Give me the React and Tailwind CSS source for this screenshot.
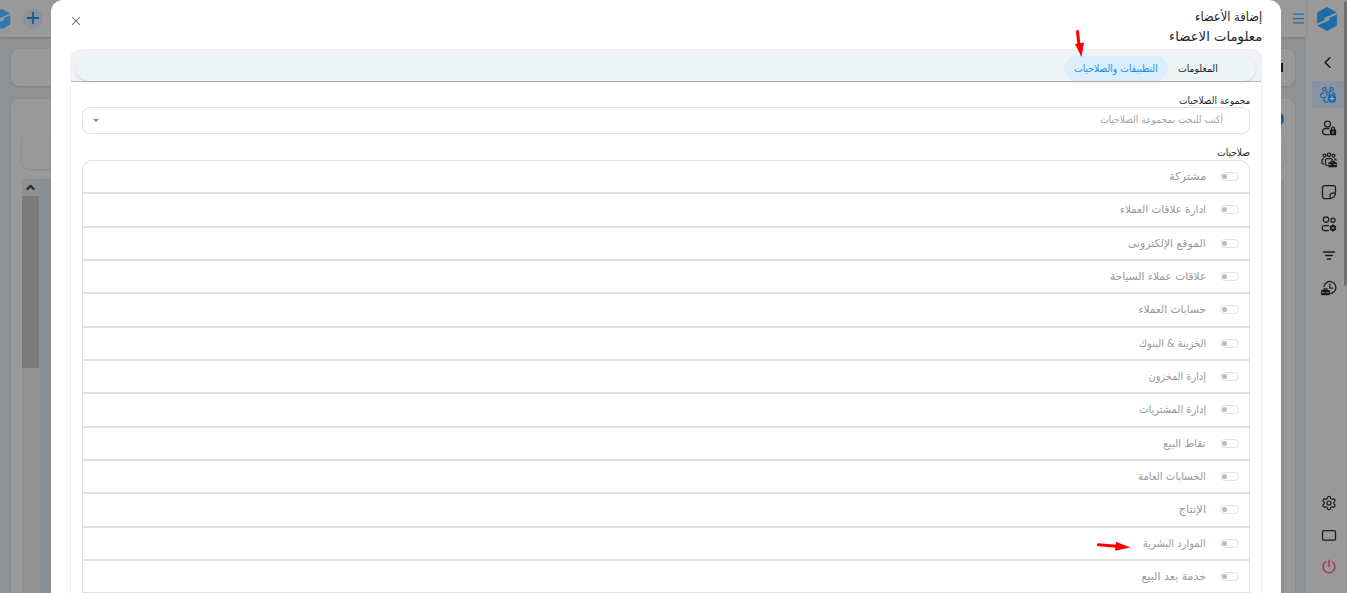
import { useLayoutEffect, useRef } from 'react'
import { ChevronLeft, Menu, Plus, Settings, X, ChevronUp } from 'lucide-react'

const permissions = [
  { name: 'مشتركة', width: 37 },
  { name: 'ادارة علاقات العملاء', width: 86 },
  { name: 'الموقع الإلكترونى', width: 78 },
  { name: 'علاقات عملاء السياحة', width: 96 },
  { name: 'حسابات العملاء', width: 67.5 },
  { name: 'الخزينة & البنوك', width: 67 },
  { name: 'إدارة المخزون', width: 57.5 },
  { name: 'إدارة المشتريات', width: 67 },
  { name: 'نقاط البيع', width: 43 },
  { name: 'الحسابات العامة', width: 68 },
  { name: 'الإنتاج', width: 27.5 },
  { name: 'الموارد البشرية', width: 63 },
  { name: 'خدمة بعد البيع', width: 64 },
]

// keeps a label at a fixed width whatever the fallback font is
function Label({ width, className, children }) {
  const ref = useRef(null)

  useLayoutEffect(() => {
    const el = ref.current
    el.style.transform = `scaleX(${width / el.offsetWidth})`
  }, [width])

  return (
    <span className={`flex shrink-0 items-center ${className}`} style={{ width }}>
      <span ref={ref} className="inline-block shrink-0 origin-right whitespace-nowrap">{children}</span>
    </span>
  )
}

function Logo({ className }) {
  return (
    <svg viewBox="0 0 22 24" className={className}>
      <path d="M.8 7.500v9M21.200 7.500v9" stroke="#a58c7c" strokeWidth="1" />
      <path fill="currentColor" d="M11 0 20.800 5.500v13L11 24 1.200 18.500v-13z" />
      <path d="M22 6 8.500 12M0 18l13.500-6" fill="none" stroke="#989898" strokeWidth="2" />
    </svg>
  )
}

function Icon({ children, className = 'text-[#1b1b1d]' }) {
  return (
    <svg viewBox="0 0 16 16" fill="none" stroke="currentColor" strokeWidth="1.250" strokeLinecap="round" strokeLinejoin="round" className={`size-4 shrink-0 ${className}`}>
      {children}
    </svg>
  )
}

function TeamIcon({ children, className }) {
  return (
    <Icon className={className}>
      <circle cx="4.500" cy="2.400" r="1.700" />
      <circle cx="11.500" cy="2.400" r="1.700" />
      <circle cx="8" cy="6.500" r="1.700" />
      <path d="M3.500 6H2.300A1.500 1.500 0 0 0 .8 7.500V9c0 1 .7 1.500 1.700 1.500M12.500 6h1.200c.9 0 1.500.7 1.500 1.500M6 10.200c-1.200 0-2 .8-2 1.800v1.200c0 1 .8 1.800 1.800 1.800H8" />
      {children}
    </Icon>
  )
}

function Sidebar() {
  return (
    <aside className="flex w-[41px] shrink-0 bg-[#999]">
      <div className="flex h-[593px] w-[3px] shrink-0 pt-px">
        <div className="h-[285px] w-full rounded-full bg-[#707070]" />
      </div>
      <div className="flex w-[38px] flex-col">
        <div className="flex h-[38px] w-full items-center ps-[6px]">
          <Logo className="h-6 w-[22px] text-[#1b6cab]" />
        </div>
        <div className="flex h-[43px] items-center ps-[7px] pt-1.5">
          <ChevronLeft className="h-[19px] w-[19px] text-[#111]" strokeWidth={1.8} />
        </div>
        <div className="flex h-[27px] w-[32px] items-center justify-center bg-[#8992a0] pt-px">
          <TeamIcon className="text-[#1767a7]">
            <circle cx="12" cy="11.500" r="3.600" fill="currentColor" />
            <path d="M12 9.700v3.600M10.200 11.500h3.600" stroke="#a5adb8" />
          </TeamIcon>
        </div>
        <div className="mt-[12px] flex flex-col gap-4 ps-[7px]">
          <Icon>
            <circle cx="6.500" cy="4" r="3" />
            <path d="M8 8.500H4.500C2.500 8.500 1.500 9.800 1.500 11.500S2.500 14.500 4.500 14.500H8" />
            <path d="M9.500 10h5v4.500h-5z" fill="currentColor" />
            <path d="M10.500 10V8.600a1.500 1.500 0 0 1 3 0V10" />
            <path d="M12 11.700v1.200" stroke="#999" />
          </Icon>
          <Icon>
            <circle cx="3.500" cy="3.500" r="1.500" />
            <circle cx="8" cy="2.800" r="1.700" />
            <circle cx="12.500" cy="3.500" r="1.500" />
            <path d="M2.500 6.800C1.500 6.800 1 7.500 1 8.300v2.200C1 11.500 1.700 12 2.500 12M6.300 13.500c-1.300 0-1.800-.8-1.800-1.800V8.500c0-1 .7-1.800 1.700-1.800h3.600c.7 0 1.200.3 1.500.8M13.500 6.800c.9 0 1.500.7 1.500 1.500" />
            <path d="M8 10.800h7.300v3.700H8z" fill="currentColor" />
            <path d="M10.200 10.500V9h3v1.500" />
            <path d="M8 12.500h2M13 12.500h2" stroke="#999" strokeWidth=".8" />
          </Icon>
          <Icon>
            <path d="M4 1.500h8.500a2 2 0 0 1 2 2V9c0 3-2.500 5.500-5.500 5.500H4a2.500 2.500 0 0 1-2.500-2.500V4A2.500 2.500 0 0 1 4 1.500zM9 14.300v-2.800A2.500 2.500 0 0 1 11.500 9h2.900" />
          </Icon>
          <Icon>
            <circle cx="5" cy="3.600" r="2.700" />
            <circle cx="12" cy="4.300" r="2.100" />
            <path d="M7.500 9.500h-4C2 9.500 1.200 10.500 1.200 12s1 2.500 2.300 2.500h4" />
            <circle cx="12" cy="12" r="2" strokeWidth="1.800" />
            <path d="M12 8.900v6.200M9.400 10.500l5.200 3M9.400 13.500l5.200-3" strokeWidth="1.400" />
            <circle cx="12" cy="12" r="1.100" fill="#999" stroke="none" />
          </Icon>
          <Icon>
            <path d="M2.500 4h11M4.800 7.500h6.400M6.500 11h3" strokeWidth="1.600" />
          </Icon>
          <Icon>
            <path d="M3 6.500a6 6 0 1 1 6 7M8.800 4v4h3" />
            <path d="M.8 10.500h7.400v4H.8z" fill="currentColor" />
            <path d="M3 10.500V8.800h3v1.700" />
            <path d="M1.500 12.500h2M5.500 12.500h2" stroke="#999" strokeWidth=".7" />
          </Icon>
        </div>
        <div className="mt-auto mb-[18px] flex flex-col gap-4 ps-[7px]">
          <Settings className="size-4 text-[#1b1b1d]" strokeWidth={1.8} />
          <Icon>
            <rect x="1.500" y="3.500" width="13" height="9.600" rx="1.300" />
          </Icon>
          <Icon className="text-[#aa2742]">
            <path d="M8 1v6.500M4.800 2.700a6 6 0 1 0 6.400 0" />
          </Icon>
        </div>
      </div>
    </aside>
  )
}

function Page() {
  return (
    <div className="flex h-[593px] overflow-hidden bg-[#8e9295]">
      <Sidebar />
      <div className="flex grow flex-col">
        <header className="flex h-[37px] shrink-0 items-center justify-between bg-[#999] shadow-sm">
          <Menu className="-mt-[1px] size-[15px] text-[#1a6cac]" strokeWidth={2} />
          <div className="flex items-center gap-[10px]">
            <span className="flex size-5 items-center justify-center rounded-full bg-[#8b9197]">
              <Plus className="-mt-[1px] size-[18px] text-[#14599a]" strokeWidth={2.4} />
            </span>
            <span className="flex h-[20px] w-[13px] justify-start overflow-hidden">
              <Logo className="h-[20px] w-[22px] shrink-0 text-[#2e78b5]" />
            </span>
          </div>
        </header>
        <div className="mx-[11px] mt-3 flex h-[37px] shrink-0 items-center rounded-lg bg-[#999] ps-3 shadow-sm">
          <div className="h-[9px] w-[2px] bg-[#17181a]" />
        </div>
        <div className="mx-[11px] mt-[13px] flex grow flex-col rounded-t-lg bg-[#999] px-[11px] shadow-sm">
          <div className="mt-3 -mb-[15px] h-4 w-5 rounded-full bg-[#145d9b]" />
          <div className="mt-[20px] h-[37px] shrink-0 rounded-lg bg-[#989898] shadow-sm" />
          <div className="mt-[10px] flex grow justify-end bg-[#898f93]">
            <div className="flex w-[17px] flex-col items-center bg-[#919191]">
              <div className="flex h-[17px] items-center">
                <ChevronUp className="size-[13px] text-[#303030]" strokeWidth={4} />
              </div>
              <div className="h-[172px] w-full bg-[#7b7b7b]" />
            </div>
          </div>
        </div>
      </div>
    </div>
  )
}

function PermissionRow({ name, width }) {
  return (
    <div className="flex h-[33.33px] shrink-0 items-center border border-[#dee2e6] ps-[10px] first:rounded-t-[10px]">
      <span className="flex h-[9px] w-[19px] items-center justify-end rounded-full border border-[#dee2e6] pe-[1px]">
        <span className="size-[5px] rounded-full bg-[#bbb]" />
      </span>
      <Label width={width} className="ms-[14px] pt-px text-[11px] text-[#969a9f]">{name}</Label>
    </div>
  )
}

export default function App() {
  return (
    <div dir="rtl" className="relative h-[593px] w-full overflow-hidden font-['DejaVu_Sans',sans-serif]">
      <Page />

      <div className="absolute top-0 left-[51px] flex h-[600px] w-[1230px] flex-col rounded-t-xl bg-white px-[19px]">
        <div className="flex h-[49px] shrink-0 justify-between">
          <div className="pt-2">
            <Label width={67} className="h-[18px] text-[12.5px] font-medium text-[#212529]">إضافة الأعضاء</Label>
            <Label width={93} className="h-[19px] pt-px text-[13.5px] text-[#212529]">معلومات الاعضاء</Label>
          </div>
          <X className="mt-[14px] me-[-1px] size-[14px] text-[#666]" strokeWidth={1.8} />
        </div>

        <div className="flex grow flex-col rounded-t-[10px] border-x border-[#eceff1]">
          <div className="flex h-[33px] shrink-0 items-end rounded-t-[10px] border-b border-[#b6bec5] bg-[#f0f2f5] px-[5px]">
            <div className="flex h-[25px] w-full rounded-full bg-[#eef3f6] ps-[28px] shadow-sm">
              <div className="flex items-center px-[10px] pb-px">
                <Label width={40} className="text-[10px] text-[#212529]">المعلومات</Label>
              </div>
              <div className="flex w-[104px] items-center justify-center rounded-full bg-[#dbeefe] pb-px">
                <Label width={84} className="text-[10px] text-[#1d8be0]">التطبيقات والصلاحيات</Label>
              </div>
            </div>
          </div>

          <div className="flex flex-col px-[11px] pt-[10px]">
            <Label width={71} className="h-[15px] pt-px text-[10px] text-[#212529]">مجموعة الصلاحيات</Label>
            <div className="flex h-[27px] items-center justify-between rounded-lg border border-[#dee2e6] ps-[26px] pe-[10px]">
              <Label width={123} className="-mt-[3px] text-[10px] text-[#a6a29f]">أكتب للبحث بمجموعة الصلاحيات</Label>
              <span className="border-x-[3px] border-t-[3px] border-x-transparent border-t-[#888]" />
            </div>
            <Label width={33} className="mt-[10px] h-4 text-[10px] text-[#212529]">صلاحيات</Label>
            <div className="flex flex-col">
              {permissions.map(p => <PermissionRow key={p.name} {...p} />)}
            </div>
          </div>
        </div>
      </div>

      {/* pointers to the tab and to the HR row */}
      <svg className="absolute top-[29px] left-[1072px] h-[28px] w-[14px]" viewBox="0 0 14 28">
        <path d="M5.500 2.500 7 16" stroke="#f00" strokeWidth="3" strokeLinecap="round" />
        <path d="M3 15 12 13.500 9.500 28z" fill="#f00" />
      </svg>
      <svg className="absolute top-[540px] left-[1096px] h-[12px] w-[36px]" viewBox="0 0 36 12">
        <path d="M2.500 4.800 21 6.300" stroke="#f00" strokeWidth="3" strokeLinecap="round" />
        <path d="M20 1.800 34.500 7.500 19 10.800z" fill="#f00" />
      </svg>
    </div>
  )
}
